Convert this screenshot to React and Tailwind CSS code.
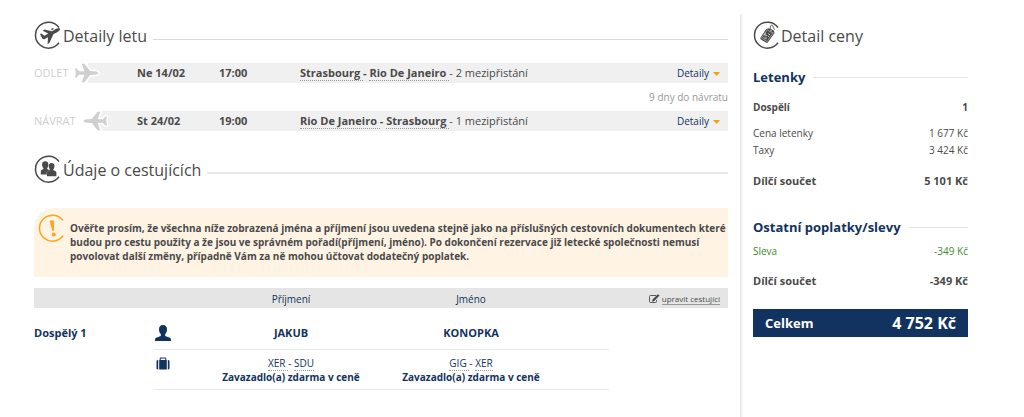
function Ring({ children, className = 'text-[#4a4a4a]' }) {
  return (
    <svg viewBox="0 0 28 28" className={`h-7 w-7 shrink-0 ${className}`} fill="currentColor" aria-hidden="true">
      <path d="M25 6.5A13 13 0 1 0 25 21.8" fill="none" stroke="currentColor" strokeWidth="1.5" />
      {children}
    </svg>
  )
}

function Takeoff() {
  return (
    <Ring>
      <path d="M26 7.6C24.6 7 22.6 7.4 20.8 8.6L18 10.3L10.4 8.6L8.8 9.8L14.2 12.5L10.6 14.8L7.2 12.4L6 13.2L8.4 17.4C9 18.4 9.8 18.6 10.8 18L14 16.2L13.6 23L15.4 22L19.4 13.2L23.6 11C25.4 10 26.4 8.6 26 7.6Z" />
      <path d="M16.6 8.2L18.6 7L20 7.8L18.2 9Z" />
    </Ring>
  )
}

function People() {
  return (
    <Ring>
      <path d="M11.2 6.2C13.5 6.2 14.5 7.9 14.4 9.9C14.3 11.4 13.7 12.4 13.2 13V14.1L16.6 15.6V19.4H6.8V16.4C6.8 15.2 7.3 15 9.4 14V13C8.7 12.3 8.2 11.3 8.1 9.9C7.9 7.9 8.9 6.2 11.2 6.2Z" />
      <path
        d="M17.6 8C19.8 8 20.6 9.6 20.5 11.3C20.4 12.7 19.8 13.7 19.4 14.3V15.3C21.6 16.2 22.4 16.5 22.4 17.8V21.2H13V17.8C13 16.5 13.8 16.2 15.8 15.3V14.3C15.2 13.6 14.8 12.6 14.7 11.3C14.6 9.6 15.4 8 17.6 8Z"
        stroke="white"
        strokeWidth="0.5"
        paintOrder="stroke"
      />
    </Ring>
  )
}

function PriceTag() {
  return (
    <Ring>
      <path d="M15.6 7.2L20.6 9.2L21.6 12L15 21.2Q14.2 22.4 13 21.6L8 18.6Q6.8 17.8 7.6 16.6L13 8.2Z" />
      <path d="M14.3 8.8L18.9 11.8L20.4 11.6L14.2 20.6L8.4 17Z" fill="none" stroke="white" strokeWidth="0.4" />
      <path d="M12.5 11.6L11.7 14.2M11 13.6L14 14.8M15.2 12.6L17.2 14M14.8 14.8L16.2 16M10.4 16.2L13 18.2M12.4 16L14 17.6" stroke="white" strokeWidth="0.7" />
      <circle cx="18" cy="9.8" r="0.8" fill="white" />
      <path d="M18 9.8C16.4 6 17.6 3.6 19.2 4.2C20.8 4.8 19.4 7.4 21.8 8.4" fill="none" stroke="currentColor" strokeWidth="0.9" />
    </Ring>
  )
}

function Warning() {
  return (
    <Ring className="text-[#ffa31a]">
      <path d="M11.6 6.8L15.8 6.2L16.2 16.4L14.2 16.7Z" />
      <circle cx="15.7" cy="20.6" r="2" />
    </Ring>
  )
}

function Plane({ back }) {
  return (
    <svg viewBox="0 0 26 20" className={`relative h-5 w-[26px] shrink-0 ${back ? '-scale-x-100' : ''}`} aria-hidden="true">
      <path
        d="M1 5.6H2.6L5.2 8.2L10.4 8.2L7.6 0.8H10.4L16.2 8L21 8.2C23 8.3 24.4 9.2 24.4 10C24.4 10.8 23 11.7 21 11.8L16.2 12L10.4 19.2H7.6L10.4 11.8L5.2 11.8L2.6 14.4H1L1.8 10Z"
        fill="#d0d0d0"
        stroke="white"
        strokeWidth="3"
        strokeLinejoin="round"
        paintOrder="stroke"
      />
    </svg>
  )
}

function SectionTitle({ icon, children, thick }) {
  return (
    <div className="flex items-center">
      {icon}
      <h2 className="pt-0.5 pl-px text-base leading-6">{children}</h2>
      <div className={`mt-2 ml-1.5 flex-1 ${thick ? 'border-t-2 border-[#e8e8e8]' : 'border-t border-[#d9d9d9]'}`} />
    </div>
  )
}

function Place({ children }) {
  return <span className="border-b border-dotted border-[#999]">{children}&nbsp;</span>
}

function Flight({ label, back, date, time, from, to, stops }) {
  return (
    <div className="flex h-5 items-center text-[11px] leading-5">
      <span className="text-[#cfcfcf]">{label}</span>
      <div className="ml-1.5 flex min-w-0 flex-1 items-center">
        <Plane back={back} />
        <div className="-ml-3 h-5 flex-1 bg-[#f0f0f0]" />
      </div>
      <div className="flex h-5 w-[591px] items-center bg-[#f0f0f0]">
        <b className="w-[82px]">{date}</b>
        <b className="w-[81px]">{time}</b>
        <span className="flex-1">
          <b>
            <Place>{from}</Place>- <Place>{to}</Place>
          </b>
          - {stops}
        </span>
        <button type="button" className="mr-2 flex items-center gap-1 text-[10px] text-[#12335f]">
          Detaily
          <svg viewBox="0 0 7 4" className="mt-0.5 h-1 w-[7px]" aria-hidden="true">
            <path d="M0 0H7L3.5 4Z" fill="#ff9c0f" />
          </svg>
        </button>
      </div>
    </div>
  )
}

function Codes({ from, to }) {
  return (
    <td className="border-b border-[#e8e8e8] pt-1.5 pb-[5px] text-center align-top text-[10px] leading-[14px]">
      <div>
        <Place>{from}</Place>- <span className="border-b border-dotted border-[#999]">{to}</span>
      </div>
      <b>Zavazadlo(a) zdarma v ceně</b>
    </td>
  )
}

function Passengers() {
  return (
    <table className="mt-[11px] w-full table-fixed text-[#12335f]">
      <colgroup>
        <col className="w-[120px]" />
        <col className="w-[47px]" />
        <col className="w-[180px]" />
        <col className="w-[180px]" />
        <col className="w-12" />
        <col />
      </colgroup>
      <thead>
        <tr className="h-5 bg-[#e5e5e5] text-[10px] leading-[18px] *:px-0 *:pt-0.5 *:pb-0 *:font-normal">
          <td colSpan={2} />
          <th scope="col">Příjmení</th>
          <th scope="col">Jméno</th>
          <td colSpan={2}>
            <a href="#edit" className="mr-2 flex items-center justify-end gap-0.5 text-[8px] leading-[11px] text-[#4a4a4a]">
              <svg viewBox="0 0 12 10" className="h-2.5 w-3" aria-hidden="true">
                <path d="M8 1.5H2.5Q1.5 1.5 1.5 2.5V7.5Q1.5 8.5 2.5 8.5H7.5Q8.5 8.5 8.5 7.5V6" fill="none" stroke="currentColor" strokeWidth="0.9" />
                <path d="M9.8 0.2L11.6 1.6L6.3 7L4 7.8L4.6 5.5Z" fill="currentColor" />
              </svg>
              <span className="border-b border-[#999]">upravit cestující</span>
            </a>
          </td>
        </tr>
      </thead>
      <tbody>
        <tr className="text-[11px] leading-5">
          <th scope="row" rowSpan={2} className="pt-[15px] text-left align-top">Dospělý 1</th>
          <td className="h-[41px] border-b border-[#e8e8e8] pt-2.5">
            <svg viewBox="0 0 18 18" className="h-[18px] w-[18px]" fill="currentColor" aria-hidden="true">
              <path d="M9 1C11.6 1 13 2.8 13 5.4C13 7.4 12.2 9 11.2 10V12L15.8 13.8C17 14.3 17 15 17 17H1C1 15 1 14.3 2.2 13.8L6.8 12V10C5.8 9 5 7.4 5 5.4C5 2.8 6.4 1 9 1Z" />
            </svg>
          </td>
          <td className="border-b border-[#e8e8e8] pt-2.5 text-center font-bold">JAKUB</td>
          <td className="border-b border-[#e8e8e8] pt-2.5 text-center font-bold">KONOPKA</td>
          <td className="border-b border-[#e8e8e8]" />
        </tr>
        <tr>
          <td className="border-b border-[#e8e8e8] pt-[7px] align-top">
            <svg viewBox="0 0 14 13" className="ml-0.5 h-[13px] w-3.5" fill="currentColor" aria-hidden="true">
              <path d="M4.2 3V1H9.8V3" fill="none" stroke="currentColor" strokeWidth="1" />
              <path d="M3.2 3H10.8V12.6H3.2ZM0.5 4Q0.5 3 2.2 3V12.6Q0.5 12.6 0.5 11.6ZM11.8 3Q13.5 3 13.5 4V11.6Q13.5 12.6 11.8 12.6Z" />
            </svg>
          </td>
          <Codes from="XER" to="SDU" />
          <Codes from="GIG" to="XER" />
          <td className="border-b border-[#e8e8e8]" />
        </tr>
      </tbody>
    </table>
  )
}

function PriceTitle({ children }) {
  return (
    <div className="flex items-center gap-2">
      <h3 className="text-[13px] leading-5 font-bold text-[#12335f]">{children}</h3>
      <div className="mt-px flex-1 border-t border-[#e5e5e5]" />
    </div>
  )
}

function PriceRow({ label, value, className }) {
  return (
    <div className={`flex justify-between ${className}`}>
      <dt>{label}</dt>
      <dd>{value}</dd>
    </div>
  )
}

function App() {
  return (
    <div className="flex min-h-screen bg-white font-['Open_Sans','Noto_Sans',sans-serif] text-[#4a4a4a]">
      <main className="min-w-0 flex-1 pt-[21px] pr-3 pl-[34px]">
        <SectionTitle icon={<Takeoff />}>Detaily letu</SectionTitle>
        <div className="mt-3.5">
          <Flight label="ODLET" date="Ne 14/02" time="17:00" from="Strasbourg" to="Rio De Janeiro" stops="2 mezipřistání" />
          <p className="text-right text-[10px] leading-7 text-[#999]">9 dny do návratu</p>
          <Flight back label="NÁVRAT" date="St 24/02" time="19:00" from="Rio De Janeiro" to="Strasbourg" stops="1 mezipřistání" />
        </div>

        <div className="mt-6">
          <SectionTitle icon={<People />} thick>Údaje o cestujících</SectionTitle>
        </div>
        <div className="mt-[25px] flex rounded-tl-[20px] bg-[#fff4e4] pl-1">
          <div className="pt-1.5">
            <Warning />
          </div>
          <p className="ml-1 pt-[13px] pb-3.5 text-[10px] leading-[14px] font-bold">
            Ověřte prosím, že všechna níže zobrazená jména a příjmení jsou uvedena stejně jako na příslušných cestovních dokumentech které budou pro cestu použity a že jsou ve správném pořadí(příjmení, jméno). Po dokončení rezervace již letecké společnosti nemusí povolovat další změny, případně Vám za ně mohou účtovat dodatečný poplatek.
          </p>
        </div>
        <Passengers />
      </main>

      <div className="mt-3.5 w-[3px] bg-linear-to-r from-[#e4e4e4] to-white" />

      <aside className="w-[281px] shrink-0 pt-[21px] pr-14 pl-2.5">
        <div className="flex items-center">
          <PriceTag />
          <h2 className="pt-0.5 text-base leading-6">Detail ceny</h2>
        </div>
        <div className="mt-[18px]">
          <PriceTitle>Letenky</PriceTitle>
        </div>
        <dl>
          <PriceRow label="Dospělí" value="1" className="mt-3 text-[10px] leading-4 font-bold" />
          <PriceRow label="Cena letenky" value="1 677 Kč" className="mt-2.5 text-[10px] leading-[17px]" />
          <PriceRow label="Taxy" value="3 424 Kč" className="text-[10px] leading-[17px]" />
          <PriceRow label="Dílčí součet" value="5 101 Kč" className="mt-3 text-[11px] leading-5 font-bold" />
        </dl>
        <div className="mt-[26px]">
          <PriceTitle>Ostatní poplatky/slevy</PriceTitle>
        </div>
        <dl>
          <PriceRow label="Sleva" value="-349 Kč" className="mt-1.5 text-[10px] leading-4 text-[#3d8b2c]" />
          <PriceRow label="Dílčí součet" value="-349 Kč" className="mt-3 text-[11px] leading-5 font-bold" />
          <PriceRow label="Celkem" value={<span className="text-base leading-7">4 752 Kč</span>} className="mt-[18px] h-7 items-center bg-[#12335f] px-3 text-[13px] leading-7 font-bold text-white" />
        </dl>
      </aside>
    </div>
  )
}

export default App
